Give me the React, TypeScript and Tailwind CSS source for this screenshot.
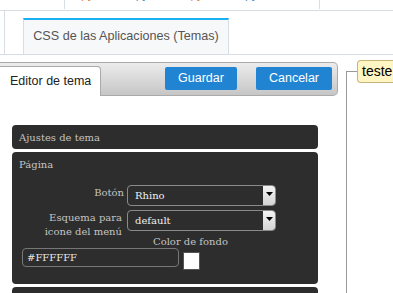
export default function App() {
  const serif = "font-['DejaVu_Serif',serif]";
  return (
    <div className="w-[393px] h-[293px] overflow-hidden bg-white font-['Liberation_Sans',Arial,sans-serif]">
      {/* top strip */}
      <div className="h-[11px] border-b border-[#d6dde4] flex">
        <div className="w-[64px] shrink-0" />
        <div className="w-[256px] h-[9px] border-x border-[#d6dde4] overflow-hidden flex items-start text-[12px] leading-[12px]">
          <span className="ml-[16px] -mt-[12px] text-[#e08a3a]">py</span>
          <span className="ml-[42px] -mt-[12px] text-[#4a90d0]">py</span>
          <span className="ml-[42px] -mt-[12px] text-[#e08a3a]">py</span>
          <span className="ml-[42px] -mt-[12px] text-[#4a90d0]">py</span>
        </div>
      </div>
      {/* tab row */}
      <div className="h-[44px] flex border-b border-[#d6dde4]">
        <div className="w-[5px] shrink-0 border-r border-[#d6dde4]" />
        <div className="ml-[18px] mt-[7px] w-[206px] bg-[#f7f8fa] border-t-2 border-t-[#1ab0f2] border-x border-x-[#d6dde4] flex items-center justify-center text-[12.6px] text-[#555] pb-[1px]">
          CSS de las Aplicaciones (Temas)
        </div>
      </div>
      {/* main */}
      <div className="mt-[7px] flex">
        <div className="w-[338px] shrink-0">
          <div className="h-[34px] flex items-end border border-l-0 border-[#aaa] rounded-r-[5px] bg-gradient-to-b from-[#ececec] to-[#c6c6c6]">
            <div className="w-[101px] h-[30px] -mb-[1px] bg-white border border-l-0 border-b-0 border-[#aaa] rounded-tr-[4px] flex items-center pl-[10px] text-[12.5px] text-[#222]">
              Editor de tema
            </div>
            <div className="flex-1 flex justify-end items-start self-start mt-[4px] pr-[5px] gap-[19px]">
              <div className="w-[72px] h-[23px] bg-[#2184d2] rounded-[2px] text-white text-[12.5px] flex items-center justify-center">Guardar</div>
              <div className="w-[76px] h-[23px] bg-[#2184d2] rounded-[2px] text-white text-[12.5px] flex items-center justify-center">Cancelar</div>
            </div>
          </div>
          <div className={"ml-[12px] w-[306px] mt-[29px] text-[10px] " + serif}>
            <div className="h-[24px] bg-[#2d2d2d] rounded-[4px] flex items-center px-[7px] text-[#c4c4c4]">Ajustes de tema</div>
            <div className="mt-[3px] h-[132px] bg-[#2d2d2d] rounded-[4px]">
              <div className="h-[24px] flex items-center px-[7px] text-[#c4c4c4]">Página</div>
              <div className="mt-[9px] h-[21px] flex">
                <div className="w-[112px] shrink-0 text-right text-[#c4c4c4] leading-[14px] pt-[1px]">Botón</div>
                <Select value="Rhino" />
              </div>
              <div className="mt-[4px] h-[21px] flex">
                <div className="w-[110px] shrink-0 flex flex-col items-end text-[#c4c4c4] leading-[14px] pt-[1px]">
                  <span className="whitespace-nowrap">Esquema para</span>
                  <span className="whitespace-nowrap">icone del menú</span>
                </div>
                <div className="w-[2px] shrink-0" />
                <Select value="default" />
              </div>
              <div className="mt-[4px] h-[14px] leading-[14px] pl-[141px] text-[#c4c4c4]">Color de fondo</div>
              <div className="-mt-[1px] flex items-start">
                <div className="ml-[10px] w-[157px] h-[19px] border border-[#777] rounded-[4px] flex items-center pl-[4px] text-[#e8e8e8]">#FFFFFF</div>
                <div className="ml-[4px] mt-[4px] w-[17px] h-[18px] bg-white border border-[#555]" />
              </div>
            </div>
            <div className="mt-[3px] h-[30px] bg-[#2d2d2d] rounded-[4px]" />
          </div>
        </div>
        <div className="ml-[8px] flex-1 flex h-[240px]">
          <div className="w-[11px] shrink-0 mt-[9px] border-l border-t border-[#999]" />
          <div className="-mt-[2px] h-[23px] flex-1 bg-[#fff6c4] border border-[#c9b47a] rounded-[4px] rounded-r-none border-r-0 flex items-center pl-[4px] text-[14px] text-black">
            teste
          </div>
        </div>
      </div>
    </div>
  );
}

function Select({ value }: { value: string }) {
  return (
    <div className="ml-[3px] w-[149px] shrink-0 h-[21px] border border-[#8a8a8a] rounded-[4px] flex items-center">
      <div className="flex-1 pl-[7px] text-[#f0f0f0]">{value}</div>
      <div className="w-[12px] h-[19px] bg-gradient-to-b from-[#f4f4f4] to-[#d4d4d4] rounded-r-[3px] flex justify-center pt-[6px]">
        <svg width="7" height="4" viewBox="0 0 7 4"><path d="M0 0h7L3.5 4z" fill="#000" /></svg>
      </div>
    </div>
  );
}
